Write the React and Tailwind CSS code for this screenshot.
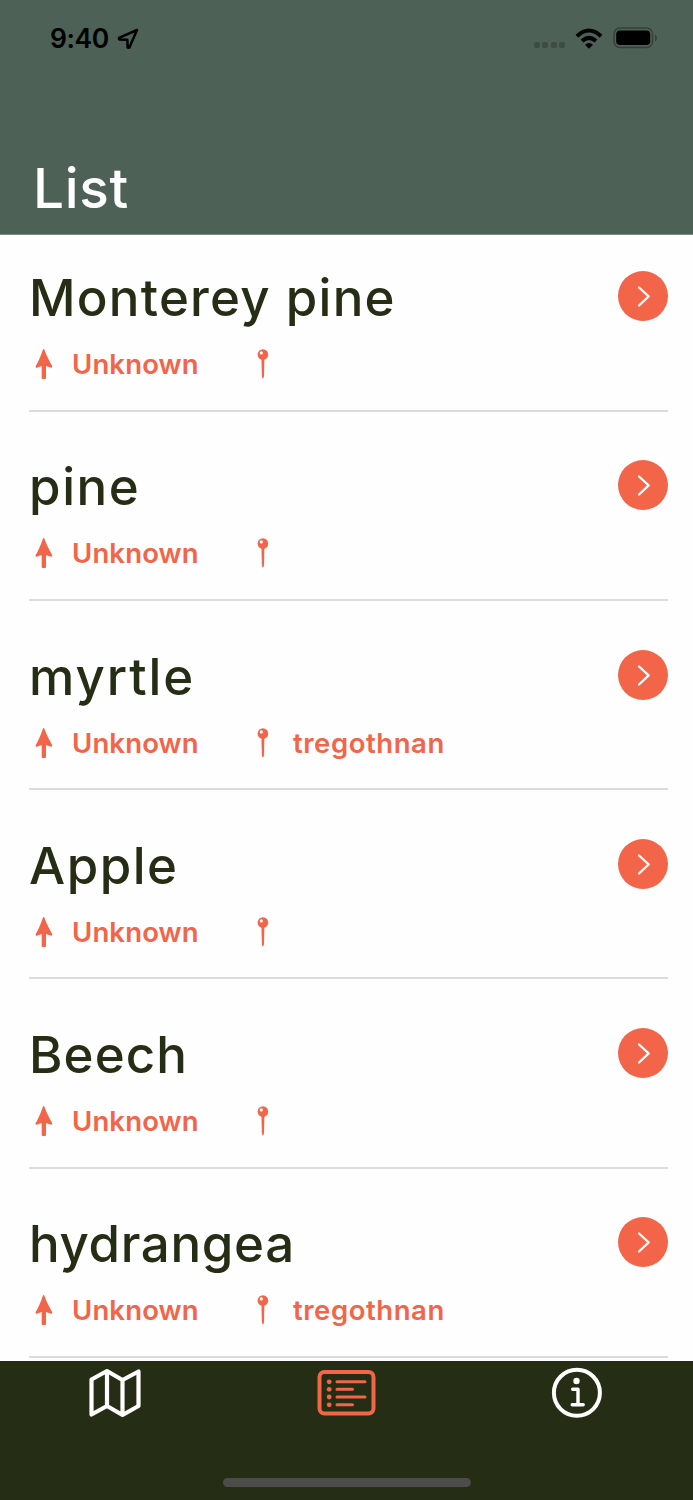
const trees = [
  { name: 'Monterey pine', age: 'Unknown', location: '', tracking: 'tracking-[1.25px]' },
  { name: 'pine', age: 'Unknown', location: '', tracking: 'tracking-[1.6px]' },
  { name: 'myrtle', age: 'Unknown', location: 'tregothnan', tracking: 'tracking-[1.9px]' },
  { name: 'Apple', age: 'Unknown', location: '', tracking: 'tracking-[1.5px]' },
  { name: 'Beech', age: 'Unknown', location: '', tracking: 'tracking-[1.1px]' },
  { name: 'hydrangea', age: 'Unknown', location: 'tregothnan', tracking: 'tracking-[0.65px]' },
];

const TreeIcon = () => (
  <svg width="18" height="32" viewBox="0 0 18 32" fill="currentColor">
    <path d="M8.6 1Q9.2 1 9.5 2C11.6 8 15 14 17.2 18.3Q17.6 20.3 15.4 19.6L11 18V30Q11 31 10 31H7.6Q6.7 31 6.7 30V18L2.3 19.6Q.1 20.3.6 18.3C3.2 14 5.8 8 7.8 2Q8 1 8.6 1Z" />
  </svg>
);

const PinIcon = () => (
  <svg width="12" height="32" viewBox="0 0 12 32" fill="currentColor">
    <path d="M4.4 10H7.4L7 28Q6.6 30.5 5.9 30.5T4.9 28Z" />
    <circle cx="5.9" cy="6.5" r="5.3" />
    <circle cx="4.3" cy="4.9" r="1.6" fill="#fff" />
  </svg>
);

const StatusBar = () => (
  <div className="flex h-[77px] items-center justify-between pl-[50px] pr-[35px] text-black">
    <div className="flex items-center gap-[8px]">
      <span className="font-['Inter',sans-serif] text-[26.5px] font-semibold tracking-[-0.4px]">9:40</span>
      <svg width="22" height="22" viewBox="0 0 22 22" fill="none" stroke="currentColor" strokeWidth="2.5" strokeLinejoin="round">
        <path d="M20 2 2 9.8 2.2 11.4 10.3 11.7 10.7 19.6 12.3 19.8Z" />
      </svg>
    </div>
    <div className="flex items-center">
      <div className="mr-[10px] mt-[13px] flex gap-[2.5px]">
        {[0, 1, 2, 3].map((dot) => (
          <span key={dot} className="size-[6px] rounded-[2px] bg-[#3d4c43]" />
        ))}
      </div>
      <svg className="mr-[10px]" width="28" height="22" viewBox="0 0 28 22" fill="none" stroke="currentColor" strokeWidth="4">
        <path d="M2 8.2Q14-3.2 26 8.2" />
        <path d="M7 13Q14 6.6 21 13" />
        <path d="M14 20.7 10 16.7Q14 13.5 18 16.7Z" fill="currentColor" stroke="none" />
      </svg>
      <svg className="-mt-[2px]" width="45" height="22" viewBox="0 0 45 22">
        <rect x="1" y="1" width="38.5" height="19.5" rx="6" fill="none" stroke="#34423a" strokeWidth="1.5" />
        <rect x="3.2" y="3.5" width="34" height="14.5" rx="3.8" />
        <path d="M42 7.5Q44 8.5 44 11T42 14.5Z" fill="#34423a" />
      </svg>
    </div>
  </div>
);

const TreeRow = ({ tree, first }) => (
  <li className={`ml-[29px] mr-[25px] flex shrink-0 items-start justify-between border-b-2 border-[#dcdcdc] ${first ? 'h-[177.2px] pt-[36.4px]' : 'h-[189.1px] pt-[48.3px]'}`}>
    <div className="-mt-[3px]">
      <h2 className={`h-[60px] whitespace-nowrap text-[51px] font-medium leading-[60px] text-[#262d15] ${tree.tracking}`}>{tree.name}</h2>
      <div className="mt-[20px] flex h-[32px] items-center pl-[6px] text-[27.5px] font-semibold leading-[32px] text-[#f26549]">
        <TreeIcon />
        <span className="ml-[19px] w-[185px] tracking-[0.15px]">{tree.age}</span>
        <PinIcon />
        <span className="ml-[24px] tracking-[0.55px]">{tree.location}</span>
      </div>
    </div>
    <button className="flex size-[50px] shrink-0 items-center justify-center rounded-full bg-[#f26549]" aria-label={tree.name}>
      <svg width="50" height="50" viewBox="0 0 50 50" fill="none" stroke="#fff" strokeWidth="2.2" strokeLinecap="round" strokeLinejoin="round">
        <path d="M21 16.5 30.7 25.4 21 34.5" />
      </svg>
    </button>
  </li>
);

const TabBar = () => (
  <nav className="flex h-[139.5px] shrink-0 flex-col justify-between bg-[#262d15] pb-[13px] pt-[6px]">
    <div className="grid grid-cols-3 text-white">
      <button className="flex justify-center" aria-label="Map">
        <svg width="54" height="54" viewBox="0 0 54 54" fill="none" stroke="currentColor" strokeWidth="4.2" strokeLinejoin="round">
          <path d="M2.5 12.5 18 4 33.5 13 49.5 4.5V39L33.5 48 18 39 2.5 47.5ZM18 4V39M33.5 13V48" />
        </svg>
      </button>
      <button className="flex justify-center text-[#f26549]" aria-label="List">
        <svg width="60" height="54" viewBox="0 0 60 54" fill="none" stroke="currentColor" strokeLinecap="round">
          <rect x="2.5" y="5" width="54" height="41.5" rx="5" strokeWidth="4" />
          <path d="M20 14.8H48M20 22.3H35.5M20 30H48M20 37.8H35.5" strokeWidth="3" />
          <g fill="currentColor" stroke="none">
            <circle cx="12.2" cy="14.8" r="2.4" />
            <circle cx="12.2" cy="22.3" r="2.4" />
            <circle cx="12.2" cy="30" r="2.4" />
            <circle cx="12.2" cy="37.8" r="2.4" />
          </g>
        </svg>
      </button>
      <button className="flex justify-center" aria-label="Info">
        <svg width="54" height="54" viewBox="0 0 54 54" fill="none" stroke="currentColor" strokeLinecap="round" strokeLinejoin="round">
          <circle cx="25.9" cy="25.8" r="23" strokeWidth="4" />
          <path d="M21.7 22.3H27V37.3M21.2 37.7H32.2" strokeWidth="3.4" />
          <circle cx="25.5" cy="14" r="3.2" fill="currentColor" stroke="none" />
        </svg>
      </button>
    </div>
    <div className="mx-auto h-[9px] w-[248px] rounded-full bg-[#4c4c4b]" />
  </nav>
);

export default function App() {
  return (
    <div className="flex h-[1500px] w-[693px] flex-col overflow-hidden bg-[#fefefe] font-['Inter',sans-serif]">
      <header className="flex h-[235px] shrink-0 flex-col justify-between border-b border-[#7c8880] bg-[#4d6156]">
        <StatusBar />
        <h1 className="mb-[14px] pl-[33px] text-[55px] font-medium leading-[64px] tracking-[0.6px] text-white">List</h1>
      </header>
      <ul className="flex min-h-0 flex-1 flex-col overflow-hidden">
        {trees.map((tree, index) => (
          <TreeRow key={tree.name} tree={tree} first={index === 0} />
        ))}
      </ul>
      <TabBar />
    </div>
  );
}
